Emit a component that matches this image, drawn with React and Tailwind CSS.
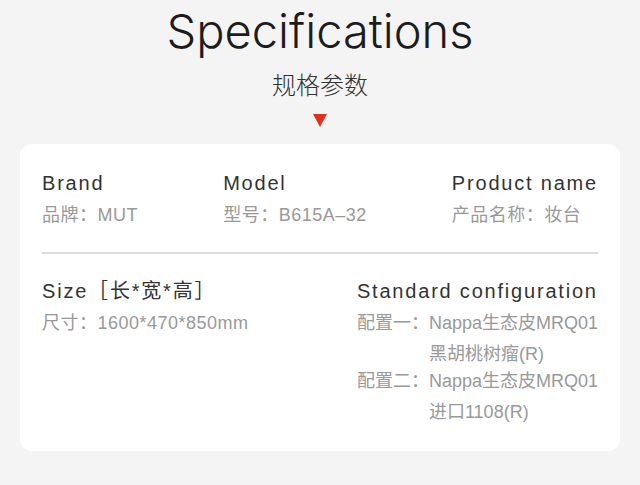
import React from 'react';

const specs = [
  { title: 'Brand', label: '品牌：', value: 'MUT' },
  { title: 'Model', label: '型号：', value: 'B615A–32' },
  { title: 'Product name', label: '产品名称：', value: '妆台' },
];

const configs = [
  { label: '配置一：', lines: ['Nappa生态皮MRQ01', '黑胡桃树瘤(R)'] },
  { label: '配置二：', lines: ['Nappa生态皮MRQ01', '进口1108(R)'] },
];

export default function App() {
  const font = "font-['Liberation_Sans','Noto_Sans_CJK_SC',sans-serif]";

  return (
    <div className={`min-h-screen bg-[#f4f4f4] pt-[7px] pb-[30px] ${font}`}>
      {/* Header */}
      <div className="flex flex-col items-center">
        <h1 className="font-['Inter',sans-serif] font-light text-[47px] leading-[47px] text-[#1c1c1c]">
          Specifications
        </h1>
        <p className="mt-[14px] text-[24px] leading-[32px] font-light text-[#333] font-['Noto_Sans_CJK_SC',sans-serif]">
          规格参数
        </p>
        <svg className="mt-[14px]" width="14" height="13" viewBox="0 0 14 13">
          <polygon points="0,0 14,0 7,13" fill="#e0301e" />
        </svg>
      </div>

      {/* Card */}
      <div className="mx-[20px] mt-[17px] bg-white rounded-[12px] px-[22px] pt-[24px] pb-[23px]">
        <div className="flex justify-between">
          {specs.map((s) => (
            <div key={s.title}>
              <div className="text-[20px] leading-[30px] tracking-[1.8px] text-[#333]">{s.title}</div>
              <div className="mt-[2px] text-[18px] leading-[30px] tracking-[0.5px] text-[#999]">
                {s.label}{s.value}
              </div>
            </div>
          ))}
        </div>

        <div className="mt-[22px] h-[2px] bg-[#dcdcdc]" />

        <div className="mt-[22px] flex justify-between">
          <div>
            <div className="text-[20px] leading-[30px] tracking-[1.8px] text-[#333]">Size［长*宽*高］</div>
            <div className="mt-[2px] text-[18px] leading-[30px] tracking-[0.5px] text-[#999]">尺寸：1600*470*850mm</div>
          </div>
          <div>
            <div className="text-[20px] leading-[30px] tracking-[1.8px] text-[#333]">Standard configuration</div>
            {configs.map((c, i) => (
              <div key={c.label} className={`flex text-[18px] leading-[31px] text-[#999] ${i > 0 ? 'mt-[-4px]' : 'mt-[2px]'}`}>
                <span className="shrink-0">{c.label}</span>
                <div>
                  {c.lines.map((l) => (
                    <div key={l}>{l}</div>
                  ))}
                </div>
              </div>
            ))}
          </div>
        </div>
      </div>
    </div>
  );
}
